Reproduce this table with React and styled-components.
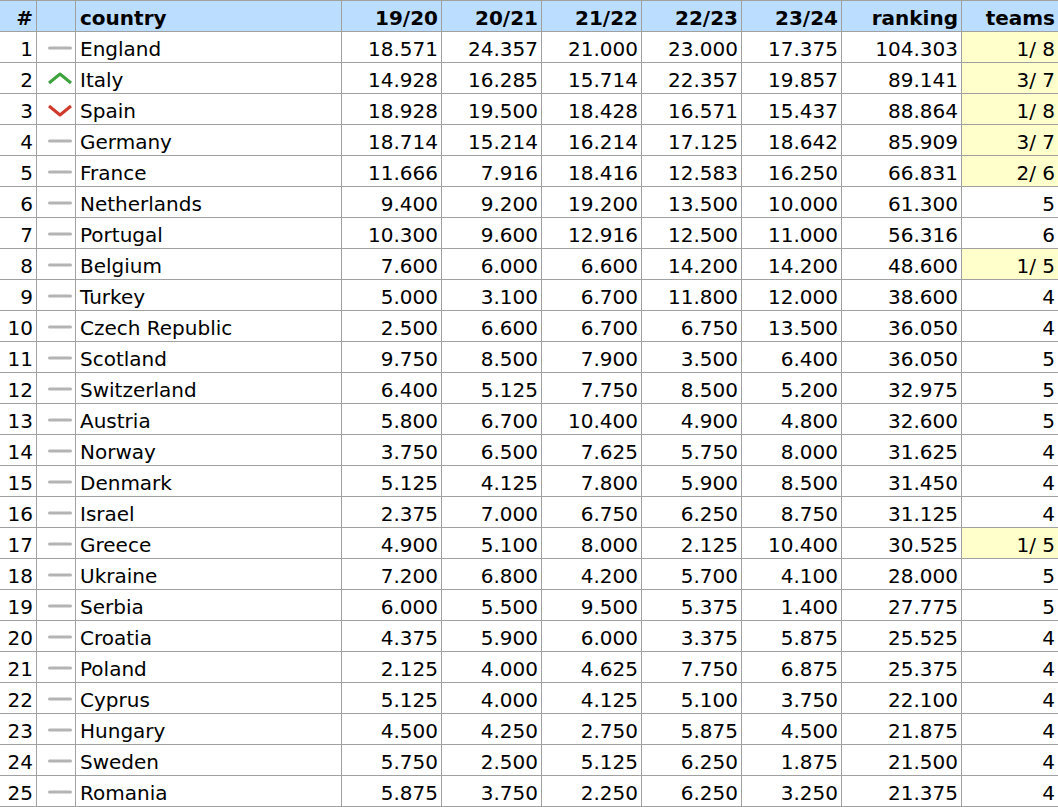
import React from 'react'
import styled, { createGlobalStyle } from 'styled-components'

const GlobalStyle = createGlobalStyle`
    html, body {
        margin: 0;
        padding: 0;
        background: #ffffff;
        overflow: hidden;
    }
    body {
        font-family: "DejaVu Sans", Verdana, sans-serif;
        color: #000000;
    }
`

const rows = [
    [1, 'England', 'same', '18.571', '24.357', '21.000', '23.000', '17.375', '104.303', '1/ 8', true],
    [2, 'Italy', 'up', '14.928', '16.285', '15.714', '22.357', '19.857', '89.141', '3/ 7', true],
    [3, 'Spain', 'down', '18.928', '19.500', '18.428', '16.571', '15.437', '88.864', '1/ 8', true],
    [4, 'Germany', 'same', '18.714', '15.214', '16.214', '17.125', '18.642', '85.909', '3/ 7', true],
    [5, 'France', 'same', '11.666', '7.916', '18.416', '12.583', '16.250', '66.831', '2/ 6', true],
    [6, 'Netherlands', 'same', '9.400', '9.200', '19.200', '13.500', '10.000', '61.300', '5'],
    [7, 'Portugal', 'same', '10.300', '9.600', '12.916', '12.500', '11.000', '56.316', '6'],
    [8, 'Belgium', 'same', '7.600', '6.000', '6.600', '14.200', '14.200', '48.600', '1/ 5', true],
    [9, 'Turkey', 'same', '5.000', '3.100', '6.700', '11.800', '12.000', '38.600', '4'],
    [10, 'Czech Republic', 'same', '2.500', '6.600', '6.700', '6.750', '13.500', '36.050', '4'],
    [11, 'Scotland', 'same', '9.750', '8.500', '7.900', '3.500', '6.400', '36.050', '5'],
    [12, 'Switzerland', 'same', '6.400', '5.125', '7.750', '8.500', '5.200', '32.975', '5'],
    [13, 'Austria', 'same', '5.800', '6.700', '10.400', '4.900', '4.800', '32.600', '5'],
    [14, 'Norway', 'same', '3.750', '6.500', '7.625', '5.750', '8.000', '31.625', '4'],
    [15, 'Denmark', 'same', '5.125', '4.125', '7.800', '5.900', '8.500', '31.450', '4'],
    [16, 'Israel', 'same', '2.375', '7.000', '6.750', '6.250', '8.750', '31.125', '4'],
    [17, 'Greece', 'same', '4.900', '5.100', '8.000', '2.125', '10.400', '30.525', '1/ 5', true],
    [18, 'Ukraine', 'same', '7.200', '6.800', '4.200', '5.700', '4.100', '28.000', '5'],
    [19, 'Serbia', 'same', '6.000', '5.500', '9.500', '5.375', '1.400', '27.775', '5'],
    [20, 'Croatia', 'same', '4.375', '5.900', '6.000', '3.375', '5.875', '25.525', '4'],
    [21, 'Poland', 'same', '2.125', '4.000', '4.625', '7.750', '6.875', '25.375', '4'],
    [22, 'Cyprus', 'same', '5.125', '4.000', '4.125', '5.100', '3.750', '22.100', '4'],
    [23, 'Hungary', 'same', '4.500', '4.250', '2.750', '5.875', '4.500', '21.875', '4'],
    [24, 'Sweden', 'same', '5.750', '2.500', '5.125', '6.250', '1.875', '21.500', '4'],
    [25, 'Romania', 'same', '5.875', '3.750', '2.250', '6.250', '3.250', '21.375', '4'],
]

const seasons = ['19/20', '20/21', '21/22', '22/23', '23/24']

function Trend({ dir }) {
    if (dir === 'up') {
        return (
            <svg width="26" height="14" viewBox="0 0 26 14">
                <polyline points="2,11 13,2 24,11" fill="none" stroke="#3ea33e" strokeWidth="3" strokeLinejoin="round" />
            </svg>
        )
    }
    if (dir === 'down') {
        return (
            <svg width="26" height="14" viewBox="0 0 26 14">
                <polyline points="2,3 13,12 24,3" fill="none" stroke="#d03a2a" strokeWidth="3" strokeLinejoin="round" />
            </svg>
        )
    }
    return (
        <svg width="26" height="14" viewBox="0 0 26 14">
            <rect x="1" y="5.5" width="24" height="3" rx="1.5" fill="#b4b4b4" />
        </svg>
    )
}

function App() {
    return (
        <>
            <GlobalStyle />
            <Table>
                <Row $head>
                    <Cell $head $align="right">#</Cell>
                    <Cell $head />
                    <Cell $head>country</Cell>
                    {seasons.map(s => (
                        <Cell $head $align="right" key={s}>{s}</Cell>
                    ))}
                    <Cell $head $align="right">ranking</Cell>
                    <Cell $head $align="right">teams</Cell>
                </Row>
                {rows.map(r => (
                    <Row key={r[0]}>
                        <Cell $align="right">{r[0]}</Cell>
                        <IconCell><Trend dir={r[2]} /></IconCell>
                        <Cell>{r[1]}</Cell>
                        {r.slice(3, 8).map((v, i) => (
                            <Cell $align="right" key={i}>{v}</Cell>
                        ))}
                        <Cell $align="right">{r[8]}</Cell>
                        <Cell $align="right" $mark={r[10]}>{r[9]}</Cell>
                    </Row>
                ))}
            </Table>
        </>
    )
}

const Table = styled.div`
    width: 1059px;
    display: flex;
    flex-direction: column;
`

const Row = styled.div`
    display: grid;
    grid-template-columns: 37px 39px 266px 100px 100px 100px 100px 100px 120px 97px;
    border-top: ${p => (p.$head ? '1px solid #a0a0a0' : 'none')};
`

const Cell = styled.div`
    height: 28px;
    line-height: 30px;
    padding: 2px 3px 0 4px;
    font-size: 20px;
    font-weight: ${p => (p.$head ? 'bold' : 'normal')};
    text-align: ${p => p.$align || 'left'};
    white-space: pre;
    overflow: hidden;
    background: ${p => (p.$head ? '#bbddff' : p.$mark ? '#ffffcc' : '#ffffff')};
    border-right: 1px solid #a0a0a0;
    border-bottom: 1px solid #a0a0a0;
`

const IconCell = styled(Cell)`
    display: flex;
    align-items: center;
    height: 29px;
    padding: 1px 0 0 10px;
`

export default App
